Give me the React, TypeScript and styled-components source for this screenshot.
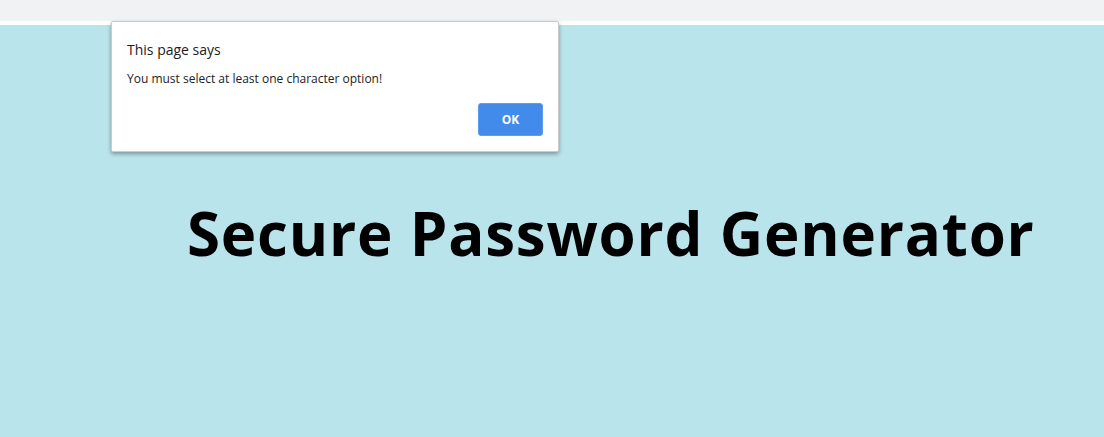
import React from "react";
import styled, { createGlobalStyle } from "styled-components";

const Global = createGlobalStyle`
  html, body { margin: 0; padding: 0; }
  body { width: 1104px; height: 437px; overflow: hidden; background: #bae4eb; }
`;

const Page = styled.div`
  width: 1104px;
  height: 437px;
  display: flex;
  flex-direction: column;
  position: relative;
`;

const TopBar = styled.div`
  height: 21px;
  background: #f1f2f4;
  border-bottom: 4px solid #ffffff;
  flex: none;
`;

const Main = styled.main`
  flex: 1;
  background: #bae4eb;
  padding: 168px 0 0 187px;
`;

const Heading = styled.h1`
  margin: 0;
  font-family: "Open Sans", "Noto Sans", sans-serif;
  font-weight: 700;
  font-size: 60px;
  line-height: 80px;
  letter-spacing: 0.8px;
  color: #000;
  white-space: nowrap;
`;

const Dialog = styled.div`
  position: absolute;
  left: 111px;
  top: 21px;
  width: 448px;
  height: 131px;
  box-sizing: border-box;
  background: #fff;
  border: 1px solid #c9cbcd;
  border-radius: 2px;
  box-shadow: 0 2px 4px rgba(0, 0, 0, 0.35);
  padding: 18px 15px 16px 15px;
  display: flex;
  flex-direction: column;
  font-family: "Open Sans", "Noto Sans", sans-serif;
  color: #202124;
`;

const DialogTitle = styled.div`
  font-size: 14px;
  line-height: 20px;
`;

const DialogMessage = styled.div`
  font-size: 12px;
  line-height: 16px;
  margin-top: 11px;
`;

const Actions = styled.div`
  margin-top: auto;
  display: flex;
  justify-content: flex-end;
`;

const OkButton = styled.button`
  width: 65px;
  height: 33px;
  margin-bottom: -1px;
  background: #428bea;
  color: #fff;
  border: 1px solid #5d9cf0;
  border-radius: 3px;
  font-family: "Open Sans", "Noto Sans", sans-serif;
  font-weight: 700;
  font-size: 12px;
  cursor: pointer;
`;

export default function App() {
  return (
    <>
      <Global />
      <Page>
        <TopBar />
        <Main>
          <Heading>Secure Password Generator</Heading>
        </Main>
        <Dialog>
          <DialogTitle>This page says</DialogTitle>
          <DialogMessage>You must select at least one character option!</DialogMessage>
          <Actions>
            <OkButton>OK</OkButton>
          </Actions>
        </Dialog>
      </Page>
    </>
  );
}
